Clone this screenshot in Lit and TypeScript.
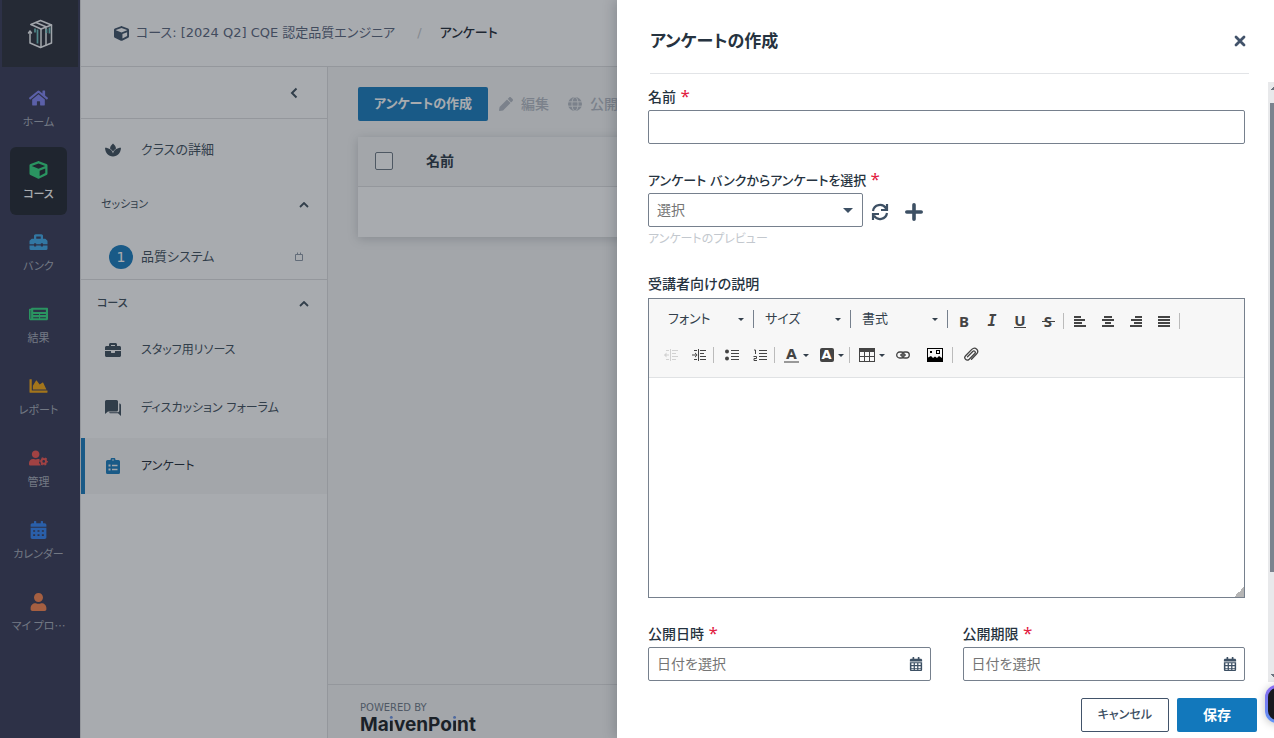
import { LitElement, html, css, svg, nothing, type TemplateResult } from "lit";
import { customElement, property } from "lit/decorators.js";
import { classMap } from "lit/directives/class-map.js";

type Glyph = { box: string; body: unknown };

const calendarTop =
  "M400 64h-48V16c0-8.8-7.2-16-16-16h-32c-8.8 0-16 7.2-16 16v48H160V16c0-8.8-7.2-16-16-16h-32c-8.8 0-16 7.2-16 16v48H48C21.5 64 0 85.5 0 112v48h448v-48c0-26.5-21.5-48-48-48z";

const GLYPHS: Record<string, Glyph> = {
  logo: {
    box: "0 0 26 30",
    body: svg`<g fill="none" stroke="#f4f6f8" stroke-width="1.5" stroke-linejoin="round" stroke-linecap="round">
      <path d="M4 5.500 13.500 1.500 24.500 6v18l-11 4.500L3 24V12.500"/><path d="M1.500 14 3 12l1.500 2"/>
      <path d="M4 5.500 14 10l10.500-4M9 3.500l10.500 4.500"/><path d="M14 10v18M19 9v17"/></g>
      <g fill="none" stroke="#6fc4c0" stroke-width="1.700"><path d="M8 9.500v4M10.500 10.500v14M19.500 10v4M22.500 8.500v6"/></g>`,
  },
  home: {
    box: "0 0 576 512",
    body: svg`<path d="M280.37 148.26L96 300.11V464a16 16 0 0 0 16 16l112.06-.29a16 16 0 0 0 15.92-16V368a16 16 0 0 1 16-16h64a16 16 0 0 1 16 16v95.64a16 16 0 0 0 16 16.05L464 480a16 16 0 0 0 16-16V300L295.67 148.26a12.19 12.19 0 0 0-15.3 0zM571.6 251.47L488 182.56V44.05a12 12 0 0 0-12-12h-56a12 12 0 0 0-12 12v72.61L318.47 43a48 48 0 0 0-61 0L4.34 251.47a12 12 0 0 0-1.6 16.9l25.5 31A12 12 0 0 0 45.15 301l235.22-193.74a12.19 12.19 0 0 1 15.3 0L530.9 301a12 12 0 0 0 16.9-1.6l25.5-31a12 12 0 0 0-1.7-16.93z"/>`,
  },
  cube: {
    box: "0 0 512 512",
    body: svg`<path d="M239.1 6.3l-208 78c-18.7 7-31.1 25-31.1 45v225.1c0 18.2 10.3 34.8 26.5 42.9l208 104c13.5 6.8 29.4 6.8 42.9 0l208-104c16.3-8.1 26.5-24.8 26.5-42.9V129.3c0-20-12.4-37.9-31.1-44.9l-208-78C262 2.2 250 2.2 239.1 6.3zM256 68.4l192 72v1.1l-192 78-192-78v-1.1l192-72zm32 356V275.5l160-65v133.9l-160 80z"/>`,
  },
  toolbox: {
    box: "0 0 512 512",
    body: svg`<path d="M502.63 214.63l-45.25-45.25c-6-6-14.14-9.37-22.63-9.37H384V80c0-26.51-21.49-48-48-48H176c-26.51 0-48 21.49-48 48v80H77.25c-8.49 0-16.62 3.37-22.63 9.37L9.37 214.63c-6 6-9.37 14.14-9.37 22.63V320h128v-16c0-8.84 7.16-16 16-16h32c8.84 0 16 7.16 16 16v16h128v-16c0-8.84 7.16-16 16-16h32c8.84 0 16 7.16 16 16v16h128v-82.75c0-8.48-3.37-16.62-9.37-22.62zM320 160H192V96h128v64zm64 208c0 8.84-7.16 16-16 16h-32c-8.84 0-16-7.16-16-16v-16H192v16c0 8.84-7.16 16-16 16h-32c-8.84 0-16-7.16-16-16v-16H0v96c0 17.67 14.33 32 32 32h448c17.67 0 32-14.33 32-32v-96H384v16z"/>`,
  },
  newspaper: {
    box: "0 0 576 512",
    body: svg`<path fill-rule="evenodd" d="M552 64H88c-13 0-24 11-24 24v8H24c-13 0-24 11-24 24v272c0 31 25 56 56 56h472c26 0 48-21 48-48V88c0-13-11-24-24-24zM48 144h16v248a8 8 0 0 1-16 0zM128 352h176v32H128zM336 352h176v32H336zM128 256h176v32H128zM336 256h176v32H336zM128 128h384v64H128z"/>`,
  },
  chart: {
    box: "0 0 512 512",
    body: svg`<path d="M500 384c6.6 0 12 5.4 12 12v40c0 6.6-5.4 12-12 12H12c-6.6 0-12-5.4-12-12V76c0-6.6 5.4-12 12-12h40c6.6 0 12 5.4 12 12v308h436zM372.7 159.5L288 216l-85.3-113.7c-5.1-6.8-15.5-6.3-19.9 1L96 248v104h384l-89.9-187.8c-3.2-6.5-11.4-8.7-17.4-4.7z"/>`,
  },
  admin: {
    box: "0 0 640 512",
    body: svg`<path d="M224 256c70.7 0 128-57.3 128-128S294.7 0 224 0 96 57.3 96 128s57.3 128 128 128zM134 288C60 288 0 348 0 422v42c0 26 21 48 48 48h350c-20-20-40-70-60-90 10-60 20-100 20-127-14-5-29-7-44-7h-17c-45 21-99 21-146 0z"/>
      <circle cx="496" cy="370" r="78" fill="none" stroke="currentColor" stroke-width="64"/>
      <circle cx="496" cy="370" r="120" fill="none" stroke="currentColor" stroke-width="44" stroke-dasharray="63 63" stroke-dashoffset="31"/>`,
  },
  calendar: {
    box: "0 0 448 512",
    body: svg`<path d=${calendarTop}/><path fill-rule="evenodd" d="M0 192h448v272c0 26-21 48-48 48H48c-27 0-48-22-48-48zM72 260v48h56v-48zM196 260v48h56v-48zM320 260v48h56v-48zM72 380v48h56v-48zM196 380v48h56v-48zM320 380v48h56v-48z"/>`,
  },
  calendarGrid: {
    box: "0 0 448 512",
    body: svg`<path d=${calendarTop}/><path fill-rule="evenodd" d="M0 192h448v272c0 26-21 48-48 48H48c-27 0-48-22-48-48zM56 230v62h82v-62zM184 230v62h82v-62zM312 230v62h82v-62zM56 336v62h82v-62zM184 336v62h82v-62zM312 336v62h82v-62zM56 434v36h82v-36zM184 434v36h82v-36zM312 434v36h82v-36z"/>`,
  },
  calendarLine: {
    box: "0 0 10 10",
    body: svg`<path fill="none" stroke="currentColor" d="M1.500 2.500h7v6h-7zM3.500 0.500v2M6.500 0.500v2"/>`,
  },
  user: {
    box: "0 0 448 512",
    body: svg`<path d="M224 256c70.7 0 128-57.3 128-128S294.7 0 224 0 96 57.3 96 128s57.3 128 128 128zm89.6 32h-16.7c-22.2 10.2-46.9 16-72.9 16s-50.6-5.8-72.9-16h-16.7C60.2 288 0 348.2 0 422.4V464c0 26.5 21.5 48 48 48h352c26.5 0 48-21.5 48-48v-41.6c0-74.2-60.2-134.4-134.4-134.4z"/>`,
  },
  spa: {
    box: "0 0 16 14",
    body: svg`<path d="M8 .5c1.700 1.500 2.800 3 3 4.900C9.700 6.200 8.700 7.300 8 8.600 7.300 7.300 6.300 6.200 5 5.400 5.200 3.500 6.300 2 8 .5zM0 4.800c4 0 7 2.200 8 5.600 1-3.400 4-5.600 8-5.600-.2 5-3.300 8.600-8 8.600S.2 9.800 0 4.800z"/>`,
  },
  briefcase: {
    box: "0 0 512 512",
    body: svg`<path d="M320 336c0 8.84-7.16 16-16 16h-96c-8.84 0-16-7.160-16-16v-48H0v144c0 25.600 22.400 48 48 48h416c25.600 0 48-22.400 48-48V288H320v48zm144-208h-80V80c0-25.600-22.400-48-48-48H176c-25.600 0-48 22.400-48 48v48H48c-25.600 0-48 22.400-48 48v80h512v-80c0-25.600-22.400-48-48-48zm-144 0H192V96h128v32z"/>`,
  },
  forum: {
    box: "0 0 16 16",
    body: svg`<path d="M1.500 0h10A1.500 1.500 0 0 1 13 1.500v8.500a1.500 1.500 0 0 1-1.500 1.500H3L0 14V1.500A1.500 1.500 0 0 1 1.500 0zM14.300 3.500c1 0 1.700.600 1.700 1.500v11l-3-2.800H5.500c-.800 0-1.300-.500-1.400-1.000h8.400c1.100 0 1.800-.800 1.800-1.800z"/>`,
  },
  survey: {
    box: "0 0 14 16",
    body: svg`<path fill-rule="evenodd" d="M1.500 2H4.500a2.500 2.500 0 0 1 5 0h3A1.500 1.500 0 0 1 14 3.500v11a1.500 1.500 0 0 1-1.500 1.500h-11A1.500 1.500 0 0 1 0 14.500v-11A1.500 1.500 0 0 1 1.500 2zM7 1.200a.8.8 0 1 0 0 1.600.8.8 0 0 0 0-1.600zM2.500 6.500v2h2v-2zM6 6.800v1.400h5.500V6.800zM2.500 10.500v2h2v-2zM6 10.800v1.400h5.500v-1.400z"/>`,
  },
  left: { box: "0 0 8 12", body: svg`<path fill="none" stroke="currentColor" stroke-width="2" d="M6.500 1.500 2 6l4.500 4.500"/>` },
  up: { box: "0 0 10 6", body: svg`<path fill="none" stroke="currentColor" stroke-width="1.800" d="M1 5l4-4 4 4"/>` },
  pencil: {
    box: "0 0 512 512",
    body: svg`<path d="M497.900 142.100l-46.100 46.100c-4.700 4.700-12.300 4.700-17 0l-111-111c-4.700-4.700-4.700-12.300 0-17l46.100-46.100c18.700-18.700 49.100-18.700 67.900 0l60.100 60.100c18.800 18.700 18.800 49.100 0 67.900zM284.200 99.800L21.600 362.400.4 483.900c-2.900 16.400 11.400 30.600 27.800 27.800l121.500-21.300 262.600-262.600c4.700-4.700 4.700-12.300 0-17l-111-111c-4.800-4.700-12.400-4.700-17.100 0z"/>`,
  },
  globe: {
    box: "0 0 16 16",
    body: svg`<circle cx="8" cy="8" r="8"/><g fill="none" stroke="#f7f7f7" stroke-width="1"><ellipse cx="8" cy="8" rx="3.500" ry="8"/><path d="M0 5.500h16M0 10.500h16"/></g>`,
  },
  close: { box: "0 0 12 12", body: svg`<path fill="none" stroke="currentColor" stroke-width="2.800" stroke-linecap="round" d="M2 2l8 8M10 2l-8 8"/>` },
  refresh: {
    box: "0 0 18 18",
    body: svg`<path fill="none" stroke="currentColor" stroke-width="2.200" d="M2 8a7 7 0 0 1 13-2.500M16 1v6h-6M16 10a7 7 0 0 1-13 2.500M2 17v-6h6"/>`,
  },
  plus: { box: "0 0 16 16", body: svg`<path fill="none" stroke="currentColor" stroke-width="3.200" stroke-linecap="round" d="M8 1.600v12.800M1.600 8h12.800"/>` },
  caret: { box: "0 0 10 5", body: svg`<path d="M0 0h10L5 5z"/>` },
  alignLeft: { box: "0 0 12 12", body: svg`<path d="M0 1h7v2H0zM0 4h11v2H0zM0 7h8v2H0zM0 10h12v2H0z"/>` },
  alignCenter: { box: "0 0 12 12", body: svg`<path d="M2 1h8v2H2zM0 4h12v2H0zM3 7h6v2H3zM0 10h12v2H0z"/>` },
  alignRight: { box: "0 0 12 12", body: svg`<path d="M5 1h7v2H5zM1 4h11v2H1zM4 7h8v2H4zM0 10h12v2H0z"/>` },
  justify: { box: "0 0 12 12", body: svg`<path d="M0 1h12v2H0zM0 4h12v2H0zM0 7h12v2H0zM0 10h12v2H0z"/>` },
  outdent: {
    box: "0 0 14 12",
    body: svg`<path d="M6 0h1v12H6zM8 1h6v1H8zM8 4h4v1H8zM8 7h6v1H8zM8 10h4v1H8zM0 5.500h5v1H0zM0 6l2.500-2.500v5zM2 1h3v1H2zM2 10h3v1H2z"/>`,
  },
  indent: {
    box: "0 0 14 12",
    body: svg`<path d="M6 0h1v12H6zM8 1h6v1H8zM8 4h4v1H8zM8 7h6v1H8zM8 10h6v1H8zM0 5.500h4v1H0zM5.500 6L3 3.500v5zM2 1h3v1H2zM2 10h3v1H2z"/>`,
  },
  bullets: {
    box: "0 0 14 12",
    body: svg`<circle cx="2" cy="2.500" r="2"/><circle cx="2" cy="9.500" r="2"/><path d="M6 1h8v1H6zM6 4h8v1H6zM6 7h8v1H6zM6 10h8v1H6z"/>`,
  },
  numbers: {
    box: "0 0 14 12",
    body: svg`<path d="M6 1h8v1H6zM6 4h8v1H6zM6 7h8v1H6zM6 10h8v1H6z"/><path fill="none" stroke="currentColor" d="M1 1h1.500v4M.5 7.500h3v2h-2.500v2h3"/>`,
  },
  table: {
    box: "0 0 16 14",
    body: svg`<path fill-rule="evenodd" d="M0 0h16v14H0zM1 4v4h4V4zM6 4v4h4V4zM11 4v4h4V4zM1 9v4h4V9zM6 9v4h4V9zM11 9v4h4V9z"/>`,
  },
  link: {
    box: "0 0 14 8",
    body: svg`<g fill="none" stroke="currentColor" stroke-width="1.300"><rect x=".7" y="1" width="7.500" height="6" rx="3"/><rect x="5.800" y="1" width="7.500" height="6" rx="3"/><path d="M4 4h6"/></g>`,
  },
  image: {
    box: "0 0 16 14",
    body: svg`<path fill="#000" fill-rule="evenodd" d="M0 0h16v14H0zM1 1v8.500L4 8l2 2 2-1.500 2 1.500 2-2 3 2V1z"/><path fill="#000" d="M3 3h2v2H3zM9 2h4v4H9z"/><path fill="#f7f7f7" d="M10 3h2v2h-2z"/>`,
  },
  clip: {
    box: "0 0 16 16",
    body: svg`<path fill="none" stroke="currentColor" stroke-width="1.300" stroke-linecap="round" d="M4.500 9.800l5.200-5.300c1.500-1.500 3.500.5 2.100 2L6.200 12.200c-2.600 2.500-6-1-3.600-3.500l6.200-6.300c3.500-3.300 8 1.200 4.700 4.600l-5 5.200"/>`,
  },
};

@customElement("ui-icon")
class UiIcon extends LitElement {
  @property() name = "";
  static styles = css`
    :host { display: inline-flex; flex: none; width: 16px; height: 16px; }
    svg { display: block; width: 100%; height: 100%; fill: currentColor; }
  `;
  render() {
    const g = GLYPHS[this.name];
    return g ? html`<svg viewBox=${g.box} aria-hidden="true">${g.body}</svg>` : nothing;
  }
}

const NAV = [
  ["home", "ホーム", "home"],
  ["cube", "コース", "course"],
  ["toolbox", "バンク", "bank"],
  ["newspaper", "結果", "result"],
  ["chart", "レポート", "report"],
  ["admin", "管理", "admin"],
  ["calendar", "カレンダー", "calendar"],
  ["user", "マイ プロ…", "profile"],
];

@customElement("app-root")
class AppRoot extends LitElement {
  static styles = css`
    :host {
      display: block;
      position: relative;
      height: 100vh;
      overflow: hidden;
      color: #263340;
      font: 14px/20px "DejaVu Sans", "Noto Sans CJK JP", sans-serif;
      font-feature-settings: "palt";
    }
    * { box-sizing: border-box; }
    button, input, select, textarea { font: inherit; font-feature-settings: inherit; color: inherit; margin: 0; }
    button { border: 0; padding: 0; background: none; display: inline-flex; align-items: center; justify-content: center; }
    a { color: inherit; text-decoration: none; }
    h1, h2, p { margin: 0; }
    .shell { display: grid; grid-template-columns: 80px 1fr; height: 100%; }

    .rail { background: #333552; color: #a6abb8; font-family: "Noto Sans CJK JP", sans-serif; }
    .brand { height: 67px; margin: 0 2px; background: #252835; display: flex; align-items: center; justify-content: center; }
    .brand ui-icon { width: 26px; height: 30px; }
    .nav { display: grid; gap: 4px; padding: 8px 13px 0 10px; }
    .nav-item { display: grid; justify-items: center; align-content: start; height: 68px; padding-top: 14px; gap: 4px; border-radius: 6px; font-size: 11px; }
    .nav-item ui-icon { width: 19px; height: 18px; }
    .nav-item.on { background: #1c212a; color: #fff; font-weight: 500; }
    .nav-text { white-space: nowrap; }
    .home { color: #7f82f3; } .course { color: #2dd97d; } .bank { color: #3ba9ec; } .result { color: #2dd97d; }
    .report { color: #f7a509; } .admin { color: #f3504c; } .calendar { color: #2d80f5; } .profile { color: #fa8048; }

    .page { display: grid; grid-template-rows: 67px 1fr; min-width: 0; border-left: 1px solid #e0e0e2; background: #fff; }
    .crumbs { display: flex; align-items: center; padding-left: 33px; border-bottom: 1px solid #dedee0; color: #566179; font-size: 13px; }
    .crumbs ui-icon { color: #3a4d63; width: 15px; height: 15px; margin-right: 7px; }
    .slash { color: #c4c7cb; margin: 0 18px 0 22px; }
    .crumbs .here { color: #1a2430; font-weight: 500; }
    .columns { display: grid; grid-template-columns: 247px 1fr; min-height: 0; }

    .side { border-right: 1px solid #dedee0; color: #3a4a58; }
    .collapse { display: flex; justify-content: flex-end; height: 52px; padding-right: 29px; border-bottom: 1px solid #dedee0; margin-bottom: 3px; }
    .collapse ui-icon { width: 8px; height: 12px; }
    .entry { display: flex; align-items: center; gap: 20px; height: 56px; padding-left: 20px; border-left: 4px solid transparent; margin-bottom: 2px; font-size: 12px; }
    .entry.first { margin: 0; font-size: 13px; }
    .entry.on { background: #f7f7f7; border-color: #1278bc; color: #1a2430; }
    .entry.on ui-icon { color: #1278bc; }
    .section { display: flex; align-items: center; justify-content: space-between; width: 100%; height: 54px; padding: 0 18px 0 20px; font-size: 11px; }
    .section ui-icon { width: 10px; height: 6px; }
    .section.second { height: 42px; padding: 6px 18px 0 16px; font-weight: 500; }
    .module { display: flex; align-items: center; height: 48px; padding: 2px 23px 0 28px; border-bottom: 1px solid #dedee0; font-size: 13px; }
    .num { width: 24px; height: 24px; line-height: 24px; border-radius: 50%; background: #1278bc; color: #fff; text-align: center; margin-right: 8px; font-size: 14px; }
    .module ui-icon { width: 10px; height: 10px; margin-left: auto; color: #8b97a5; }

    .content { display: grid; grid-template-rows: 1fr 54px; background: #f7f7f7; min-width: 0; }
    .work { padding: 20px 30px 0; }
    .tools { display: flex; gap: 11px; margin-bottom: 16px; white-space: nowrap; }
    .primary { background: #1278bc; color: #fff; font-weight: 700; border-radius: 2px; height: 34px; padding: 0 16px; font-size: 13px; white-space: nowrap; }
    .tool { color: #b4bac3; font-weight: 500; gap: 8px; margin-right: 8px; }
    .tool ui-icon { width: 14px; height: 14px; }
    .grid { width: 100%; border-collapse: collapse; background: #fff; box-shadow: 0 2px 10px rgba(40, 50, 60, 0.22); }
    .grid th { height: 49px; padding: 0; text-align: left; background: #f7f7f7; border-bottom: 1px solid #dedee0; }
    .grid th.pick { width: 68px; padding-left: 17px; }
    .grid td { height: 51px; }
    .check { appearance: none; display: block; width: 18px; height: 18px; border: 1px solid #6a7581; border-radius: 2px; background: #fff; }
    .foot { border-top: 1px solid #dedee0; padding: 16px 32px 0; font-size: 10px; line-height: 14px; color: #6b7684; }
    .wordmark { font: 700 19px/20px Inter, sans-serif; color: #15191f; }
    .dot { background: linear-gradient(#6c93e6 8px, #15191f 8px); -webkit-background-clip: text; background-clip: text; color: transparent; }

    .shade { position: absolute; inset: 0; background: rgba(38, 45, 55, 0.4); }
    .drawer { position: absolute; top: 0; bottom: 0; right: 0; width: 657px; max-width: 100%; display: grid; grid-template-rows: 82px 1fr 56px; background: #fff; box-shadow: -2px 0 12px rgba(20, 28, 36, 0.22); }
    .head { display: flex; align-items: center; justify-content: space-between; height: 74px; margin: 0 25px 0 33px; padding-top: 8px; border-bottom: 1px solid #e2e4e7; }
    .head h2 { font-size: 17px; line-height: 26px; font-weight: 700; }
    .x { color: #42536a; padding: 3px; }
    .x ui-icon { width: 12px; height: 12px; }
    .form { display: grid; align-content: start; gap: 25px; overflow: hidden; padding: 4px 29px 0 31px; min-height: 0; }
    .field { display: grid; gap: 4px; align-content: start; }
    .field label { height: 20px; font-weight: 500; }
    .field .long { font-size: 13px; }
    .req { color: #e2203f; font: 400 17px/20px "Noto Sans", sans-serif; }
    .box { width: 100%; height: 34px; padding: 0 8px; border: 1px solid #76808d; border-radius: 2px; background: #fff; }
    .row { display: flex; align-items: center; gap: 8px; color: #3d5064; }
    .pickwrap { position: relative; width: 215px; color: #757575; }
    .pickwrap select, .mini select { appearance: none; }
    .pickwrap ui-icon { position: absolute; right: 10px; top: 15px; width: 10px; height: 5px; color: #3d5064; pointer-events: none; }
    .row button { height: 34px; padding: 3px 0 0; }
    .row button ui-icon { width: 18px; height: 18px; }
    .row button + button { margin-left: 8px; }
    .hint { color: #c3c8ce; margin-top: -2px; font-size: 12px; }
    .editor { display: grid; grid-template-rows: 79px 1fr; height: 300px; border: 1px solid #76808d; background: #fff; }
    .bar { display: grid; grid-template-rows: 34px 38px; padding: 3px 8px 0; background: #f7f7f7; border-bottom: 1px solid #e0e2e4; color: #444; }
    .line { display: flex; align-items: center; }
    .mini { display: flex; align-items: center; width: 97px; height: 18px; border-right: 1px solid #76808d; padding: 0 9px 0 11px; color: #333f4b; }
    .mini select { flex: 1; min-width: 0; border: 0; background: none; padding: 0; height: 20px; font-size: 13px; }
    .mini ui-icon { width: 6px; height: 3px; color: #333f4b; }
    .ic { width: 28px; height: 28px; padding-top: 3px; font-weight: 700; font-size: 15px; }
    .second-line .ic { padding-top: 0; }
    .ic ui-icon { width: 14px; height: 12px; }
    .ic.off { opacity: 0.2; }
    .ic.wide { width: 35px; gap: 4px; }
    .ic .drop { width: 6px; height: 3px; color: #333f4b; }
    .ic .big { width: 16px; height: 14px; }
    .ic .pin { width: 16px; height: 16px; }
    .ic .chain { height: 8px; }
    .b, .u, .s { font-family: "Noto Sans", sans-serif; }
    .i { font-family: "DejaVu Sans Mono", monospace; font-style: italic; }
    .u span { line-height: 14px; border-bottom: 1px solid #444; }
    .s { background: linear-gradient(#444, #444) center 16px / 13px 1px no-repeat; }
    .fg { border-bottom: 2px solid #999; line-height: 13px; padding: 0 2px; font-size: 14px; }
    .bg { background: #444; color: #fff; border-radius: 2px; width: 14px; line-height: 14px; font-size: 13px; }
    .rule { width: 1px; height: 16px; background: #bbb; margin: 3px 2px 0 1px; }
    .second-line .rule { margin: 0 4px 0 0; }
    .lead { margin-left: 2px; display: flex; align-items: center; }
    .area { width: 100%; border: 0; outline: 0; padding: 8px; resize: none; display: block; background: linear-gradient(135deg, transparent 50%, #b5b5b5 50%) right bottom / 10px 10px no-repeat; }
    .dates { display: grid; grid-template-columns: 1fr 1fr; gap: 32px; }
    .date { position: relative; }
    .date ui-icon { position: absolute; right: 8px; top: 10px; width: 14px; height: 14px; color: #3d5064; }
    input::placeholder { color: #757575; opacity: 1; }
    .actions { display: flex; justify-content: flex-end; align-items: flex-start; gap: 8px; padding: 16px 17px 0; }
    .cancel { height: 34px; padding: 0 16px; border: 1px solid #42536a; border-radius: 2px; background: #fff; font-weight: 500; font-size: 12px; color: #3d4f63; }
    .save { padding: 0 26px; font-size: 14px; }
    .track { position: absolute; right: 0; top: 82px; bottom: 56px; width: 6px; padding: 21px 0 0 2px; background: #e8e9eb; }
    .thumb { height: 81%; background: #7b838e; }
    .arrow { position: absolute; right: 0; width: 3px; height: 3px; background: linear-gradient(135deg, transparent 50%, #6b747f 50%); }
    .arrow.top { top: 5px; } .arrow.end { bottom: 5px; transform: scaleY(-1); }
    .bubble { position: absolute; right: -29px; bottom: 15px; width: 38px; height: 38px; border-radius: 12px; border: 3px solid transparent; background: linear-gradient(#17191f, #17191f) padding-box, linear-gradient(#8a6cf0, #5f94f5) border-box; box-shadow: 0 1px 8px rgba(0, 0, 0, 0.25); }
  `;

  private mini(text: string) {
    return html`<span class="mini"><select aria-label=${text}><option>${text}</option></select><ui-icon name="caret"></ui-icon></span>`;
  }

  private tool(label: string, name: string, cls = "", off = false, wide = false) {
    return html`<button class=${classMap({ ic: true, off, wide })} aria-label=${label} ?disabled=${off}><ui-icon class=${cls} name=${name}></ui-icon></button>`;
  }

  private date(id: string, label: string): TemplateResult {
    return html`<div class="field">
      <label for=${id}>${label} <span class="req">*</span></label>
      <div class="date"><input class="box" id=${id} placeholder="日付を選択" /><ui-icon name="calendarGrid"></ui-icon></div>
    </div>`;
  }

  private rail() {
    return html`<aside class="rail">
      <div class="brand"><ui-icon name="logo"></ui-icon></div>
      <nav class="nav">
        ${NAV.map(
          ([icon, text, tone], n) => html`<a href="#" class=${classMap({ "nav-item": true, on: n === 1 })}>
            <ui-icon class=${tone} name=${icon}></ui-icon><span class="nav-text">${text}</span></a>`,
        )}
      </nav>
    </aside>`;
  }

  private side() {
    return html`<nav class="side">
      <div class="collapse"><button aria-label="折りたたむ"><ui-icon name="left"></ui-icon></button></div>
      <a href="#" class="entry first"><ui-icon name="spa"></ui-icon>クラスの詳細</a>
      <button class="section">セッション<ui-icon name="up"></ui-icon></button>
      <a href="#" class="module"><span class="num">1</span>品質システム<ui-icon name="calendarLine"></ui-icon></a>
      <button class="section second">コース<ui-icon name="up"></ui-icon></button>
      <a href="#" class="entry"><ui-icon name="briefcase"></ui-icon>スタッフ用リソース</a>
      <a href="#" class="entry"><ui-icon name="forum"></ui-icon>ディスカッション フォーラム</a>
      <a href="#" class="entry on"><ui-icon name="survey"></ui-icon>アンケート</a>
    </nav>`;
  }

  private drawer() {
    return html`<section class="drawer" role="dialog" aria-labelledby="title">
      <header class="head"><h2 id="title">アンケートの作成</h2><button class="x" aria-label="閉じる"><ui-icon name="close"></ui-icon></button></header>
      <div class="form">
        <div class="field"><label for="name">名前 <span class="req">*</span></label><input class="box" id="name" /></div>
        <div class="field">
          <label class="long" for="bank">アンケート バンクからアンケートを選択 <span class="req">*</span></label>
          <div class="row">
            <span class="pickwrap"><select class="box" id="bank"><option>選択</option></select><ui-icon name="caret"></ui-icon></span>
            <button aria-label="更新"><ui-icon name="refresh"></ui-icon></button>
            <button aria-label="追加"><ui-icon name="plus"></ui-icon></button>
          </div>
          <p class="hint">アンケートのプレビュー</p>
        </div>
        <div class="field">
          <label for="desc">受講者向けの説明</label>
          <div class="editor">
            <div class="bar">
              <div class="line">
                ${this.mini("フォント")}${this.mini("サイズ")}${this.mini("書式")}
                <span class="lead">
                  <button class="ic b">B</button><button class="ic i">I</button><button class="ic u"><span>U</span></button><button class="ic s">S</button>
                  <span class="rule"></span>
                  ${this.tool("左揃え", "alignLeft")}${this.tool("中央揃え", "alignCenter")}${this.tool("右揃え", "alignRight")}${this.tool("両端揃え", "justify")}
                  <span class="rule"></span>
                </span>
              </div>
              <div class="line second-line">
                ${this.tool("インデント解除", "outdent", "", true)}${this.tool("インデント", "indent")}
                <span class="rule"></span>
                ${this.tool("箇条書き", "bullets")}${this.tool("番号付き", "numbers")}
                <span class="rule"></span>
                <button class="ic wide"><span class="fg">A</span><ui-icon class="drop" name="caret"></ui-icon></button>
                <button class="ic wide"><span class="bg">A</span><ui-icon class="drop" name="caret"></ui-icon></button>
                <span class="rule"></span>
                <button class="ic wide" aria-label="表"><ui-icon class="big" name="table"></ui-icon><ui-icon class="drop" name="caret"></ui-icon></button>
                ${this.tool("リンク", "link", "chain")}${this.tool("画像", "image", "big", false, true)}
                <span class="rule"></span>
                ${this.tool("添付", "clip", "pin")}
              </div>
            </div>
            <textarea class="area" id="desc"></textarea>
          </div>
        </div>
        <div class="dates">${this.date("from", "公開日時")}${this.date("until", "公開期限")}</div>
      </div>
      <footer class="actions"><button class="cancel">キャンセル</button><button class="primary save">保存</button></footer>
      <div class="track"><div class="arrow top"></div><div class="thumb"></div><div class="arrow end"></div></div>
      <button class="bubble" aria-label="ヘルプ"></button>
    </section>`;
  }

  render() {
    return html`<div class="shell">
        ${this.rail()}
        <div class="page">
          <header class="crumbs">
            <ui-icon name="cube"></ui-icon><a href="#">コース: [2024 Q2] CQE 認定品質エンジニア</a><span class="slash">/</span><span class="here">アンケート</span>
          </header>
          <div class="columns">
            ${this.side()}
            <main class="content">
              <div class="work">
                <div class="tools">
                  <button class="primary">アンケートの作成</button>
                  <button class="tool"><ui-icon name="pencil"></ui-icon>編集</button>
                  <button class="tool"><ui-icon name="globe"></ui-icon>公開</button>
                </div>
                <table class="grid">
                  <thead><tr><th class="pick"><input type="checkbox" class="check" aria-label="すべて選択" /></th><th>名前</th></tr></thead>
                  <tbody><tr><td colspan="2"></td></tr></tbody>
                </table>
              </div>
              <footer class="foot">POWERED BY<div class="wordmark">Ma<span class="dot">i</span>venPo<span class="dot">i</span>nt</div></footer>
            </main>
          </div>
        </div>
      </div>
      <div class="shade"></div>
      ${this.drawer()}`;
  }
}
